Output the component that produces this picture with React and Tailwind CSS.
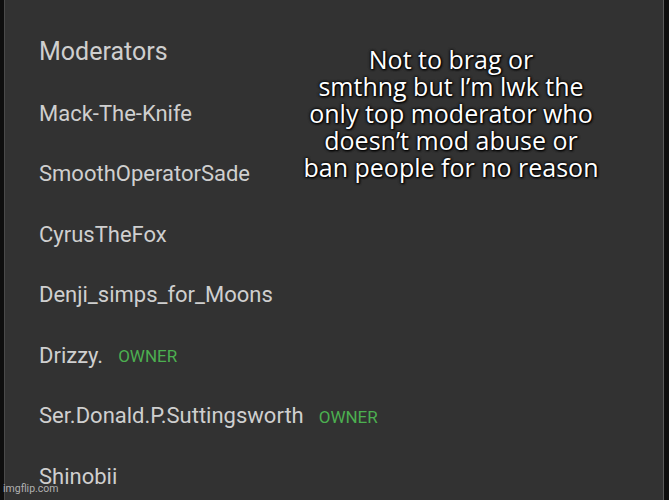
import React from 'react';

const MODS = [
  { name: 'Mack-The-Knife' },
  { name: 'SmoothOperatorSade' },
  { name: 'CyrusTheFox' },
  { name: 'Denji_simps_for_Moons' },
  { name: 'Drizzy.', owner: true },
  { name: 'Ser.Donald.P.Suttingsworth', owner: true },
  { name: 'Shinobii' },
];

const CAPTION = [
  'Not to brag or',
  'smthng but I’m lwk the',
  'only top moderator who',
  'doesn’t mod abuse or',
  'ban people for no reason',
];

const ModRow = ({ name, owner }) => (
  <div className="h-[60.5px] flex items-center gap-[15px]">
    <span className="text-[22px] text-[#cfcfcf]">{name}</span>
    {owner && <span className="text-[17px] text-[#4caf50] mt-[3px]">OWNER</span>}
  </div>
);

export default function App() {
  return (
    <div className="w-[669px] h-[500px] bg-[#0e0e0e] flex overflow-hidden font-['Roboto',sans-serif]">
      <div className="w-[4px]" />
      <div className="relative flex-1 bg-[#323232] border-l border-l-[#4a4a4a] border-r border-r-[#5a5a5a]">
        <div className="pl-[34px] pt-[36px]">
          <div className="h-[32px] flex items-center text-[25px] text-[#cfcfcf]">Moderators</div>
          <div className="mt-[15px] flex flex-col">
            {MODS.map((m) => (
              <ModRow key={m.name} name={m.name} owner={m.owner} />
            ))}
          </div>
        </div>

        <p className="absolute top-[46px] left-[286px] w-[320px] text-center text-white text-[25px] leading-[27px] font-['Open_Sans',sans-serif] [text-shadow:0_0_3px_#000,0_0_3px_#000,1px_1px_2px_#000]">
          {CAPTION.map((line, i) => (
            <React.Fragment key={line}>
              {line}
              {i < CAPTION.length - 1 && <br />}
            </React.Fragment>
          ))}
        </p>

        <div className="absolute left-[-2px] bottom-[3px] text-[10.5px] text-[#b0b0b0] font-['Roboto',sans-serif]">
          imgflip.com
        </div>
      </div>
      <div className="w-[5px]" />
    </div>
  );
}
